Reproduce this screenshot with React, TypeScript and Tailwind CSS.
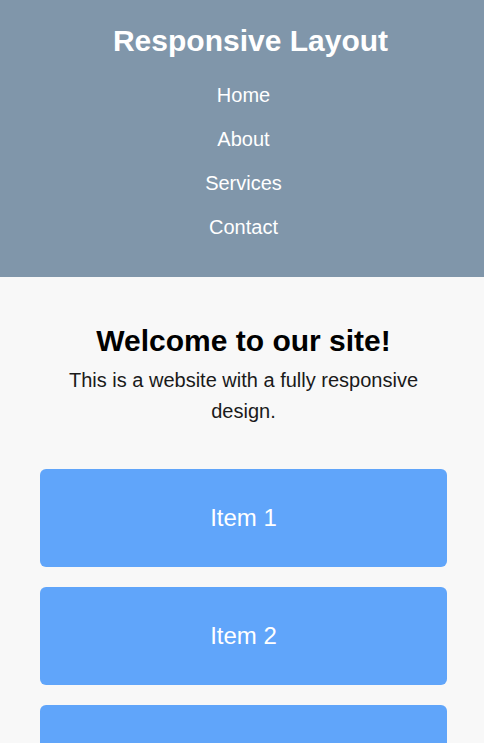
const navLinks = ["Home", "About", "Services", "Contact"];
const items = ["Item 1", "Item 2", "Item 3", "Item 4"];

export default function App() {
  return (
    <div className="min-h-screen bg-[#f8f8f8] font-['Liberation_Sans',Arial,sans-serif]">
      <header className="bg-[#8096aa] pt-6 pb-[38px] pl-[3px] text-center text-white">
        <h1 className="pl-[14px] text-[30px] leading-[34px] font-bold">
          Responsive Layout
        </h1>
        <nav className="mt-[25px] flex flex-col items-center gap-5">
          {navLinks.map((link) => (
            <a key={link} href="#" className="text-[20px] leading-6">
              {link}
            </a>
          ))}
        </nav>
      </header>

      <main className="pt-[47px] pb-10">
        <section className="text-center pl-[43px] pr-10">
          <h2 className="text-[30px] leading-[34px] font-bold text-black">
            Welcome to our site!
          </h2>
          <p className="mt-[7px] text-[20px] leading-[31px] text-[#1a1a1a]">
            This is a website with a fully responsive design.
          </p>
        </section>

        <div className="mt-[42px] ml-10 mr-[37px] flex flex-col gap-5">
          {items.map((item) => (
            <div
              key={item}
              className="h-[98px] flex items-center justify-center rounded-md bg-[#60a5fa] text-white text-[24px]"
            >
              {item}
            </div>
          ))}
        </div>
      </main>
    </div>
  );
}
